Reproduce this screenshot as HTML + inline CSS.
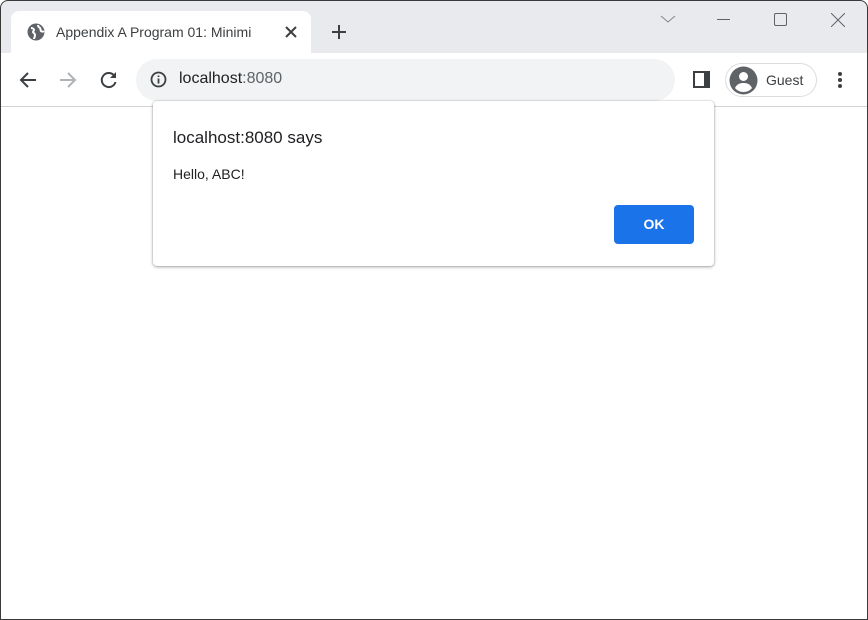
<!DOCTYPE html>
<html><head><style>
*{margin:0;padding:0;box-sizing:border-box}
body{width:868px;height:620px;overflow:hidden;font-family:"Liberation Sans",sans-serif;background:#fff;position:relative}
.win{position:absolute;left:0;top:0;width:868px;height:620px;border-radius:8px 8px 0 0;overflow:hidden;background:#fff}
.bord{position:absolute;left:0;top:0;width:868px;height:620px;border:1px solid #3a3a3a;border-radius:8px 8px 0 0;pointer-events:none}
.strip{position:absolute;left:0;top:0;width:868px;height:53px;background:#e8eaed}
.tab{position:absolute;left:11px;top:11px;width:300px;height:43px;background:#fff;border-radius:8px 8px 0 0}
.tab .t{position:absolute;left:45px;top:13px;font-size:14px;color:#3c4043;white-space:nowrap;width:226px;overflow:hidden}
.omni{position:absolute;left:136px;top:59px;width:539px;height:42px;background:#f1f3f4;border-radius:21px}
.omni .u{position:absolute;left:43px;top:11px;font-size:16px;color:#202124}
.omni .u span{color:#5f6368}
.line{position:absolute;left:0;top:106px;width:868px;height:1px;background:#d3d3d3}
.guest{position:absolute;left:725px;top:63px;width:92px;height:34px;border:1px solid #dadce0;border-radius:17px}
.guest .g{position:absolute;left:40px;top:8px;font-size:14px;color:#3c4043}
.dlg{position:absolute;left:153px;top:101px;width:561px;height:165px;background:#fff;border-radius:4px;box-shadow:0 1px 3px rgba(0,0,0,.35),0 0 1px rgba(0,0,0,.3)}
.dlg .h{position:absolute;left:20px;top:27px;font-size:17px;color:#202124}
.dlg .b{position:absolute;left:20px;top:65px;font-size:14px;color:#202124}
.ok{position:absolute;left:461px;top:104px;width:80px;height:39px;background:#1a73e8;border-radius:4px;color:#fff;font-weight:bold;font-size:14px;text-align:center;line-height:39px}
</style></head><body>
<div class="win">
<div class="strip"></div>
<div class="tab">
<svg style="position:absolute;left:16px;top:12px" width="18" height="18" viewBox="0 0 18 18"><circle cx="9" cy="9" r="8.5" fill="#5f6368"/><path d="M4 5c2 0 3 1 3 2s-1 1-1 2 2 1 2 3-1 3-1 4M11 2c0 2 1 2 2 3s0 2 1 3 2 0 3 1" stroke="#fff" stroke-width="2" fill="none"/></svg>
<div class="t">Appendix A Program 01: Minimi</div>
<svg style="position:absolute;left:274px;top:15px" width="12" height="12"><path d="M1 1L11 11M11 1L1 11" stroke="#3c4043" stroke-width="2"/></svg>
</div>
<svg style="position:absolute;left:331px;top:24px" width="16" height="16"><path d="M8 1V15M1 8H15" stroke="#3c4043" stroke-width="2"/></svg>
<svg style="position:absolute;left:660px;top:14px" width="16" height="10"><path d="M1 2L8 8L15 2" stroke="#80868b" stroke-width="1" fill="none"/></svg>
<div style="position:absolute;left:717px;top:19px;width:13px;height:1px;background:#5f6368"></div>
<div style="position:absolute;left:774px;top:13px;width:13px;height:13px;border:1px solid #5f6368;border-radius:2px"></div>
<svg style="position:absolute;left:831px;top:13px" width="14" height="14"><path d="M0 0L14 14M14 0L0 14" stroke="#5f6368" stroke-width="1"/></svg>
<svg style="position:absolute;left:19px;top:71px" width="18" height="18"><path d="M17 9H2M9 2L2 9L9 16" stroke="#3c4043" stroke-width="2" fill="none"/></svg>
<svg style="position:absolute;left:59px;top:71px" width="18" height="18"><path d="M1 9H16M9 2L16 9L9 16" stroke="#b0b3b8" stroke-width="2" fill="none"/></svg>
<svg style="position:absolute;left:99px;top:70px" width="20" height="20"><path d="M15.5 6A7 7 0 1 0 16.5 12" stroke="#3c4043" stroke-width="2" fill="none"/><path d="M17 2V8H11Z" fill="#3c4043"/></svg>
<div class="omni">
<svg style="position:absolute;left:14px;top:12px" width="17" height="17"><circle cx="8.5" cy="8.5" r="7" stroke="#3c4043" stroke-width="1.8" fill="none"/><path d="M8.5 7.5V12.5M8.5 4.5V6" stroke="#3c4043" stroke-width="1.8"/></svg>
<div class="u">localhost<span>:8080</span></div>
</div>
<div style="position:absolute;left:693px;top:71px;width:17px;height:17px;border:2px solid #3c4043;border-right-width:6px"></div>
<div class="guest">
<svg style="position:absolute;left:3px;top:2px" width="29" height="29" viewBox="0 0 29 29"><circle cx="14.5" cy="14.5" r="14" fill="#5f6368"/><circle cx="14.5" cy="10.5" r="4.5" fill="#fff"/><path d="M6 22c2-4 5-5 8.5-5s6.5 1 8.5 5c-2 2.5-5 4-8.5 4s-6.5-1.5-8.5-4z" fill="#fff"/></svg>
<div class="g">Guest</div>
</div>
<svg style="position:absolute;left:837px;top:71px" width="6" height="18"><circle cx="3" cy="3" r="2" fill="#3c4043"/><circle cx="3" cy="9" r="2" fill="#3c4043"/><circle cx="3" cy="15" r="2" fill="#3c4043"/></svg>
<div class="line"></div>
<div class="dlg">
<div class="h">localhost:8080 says</div>
<div class="b">Hello, ABC!</div>
<div class="ok">OK</div>
</div>
</div>
<div class="bord"></div>
</body></html>
